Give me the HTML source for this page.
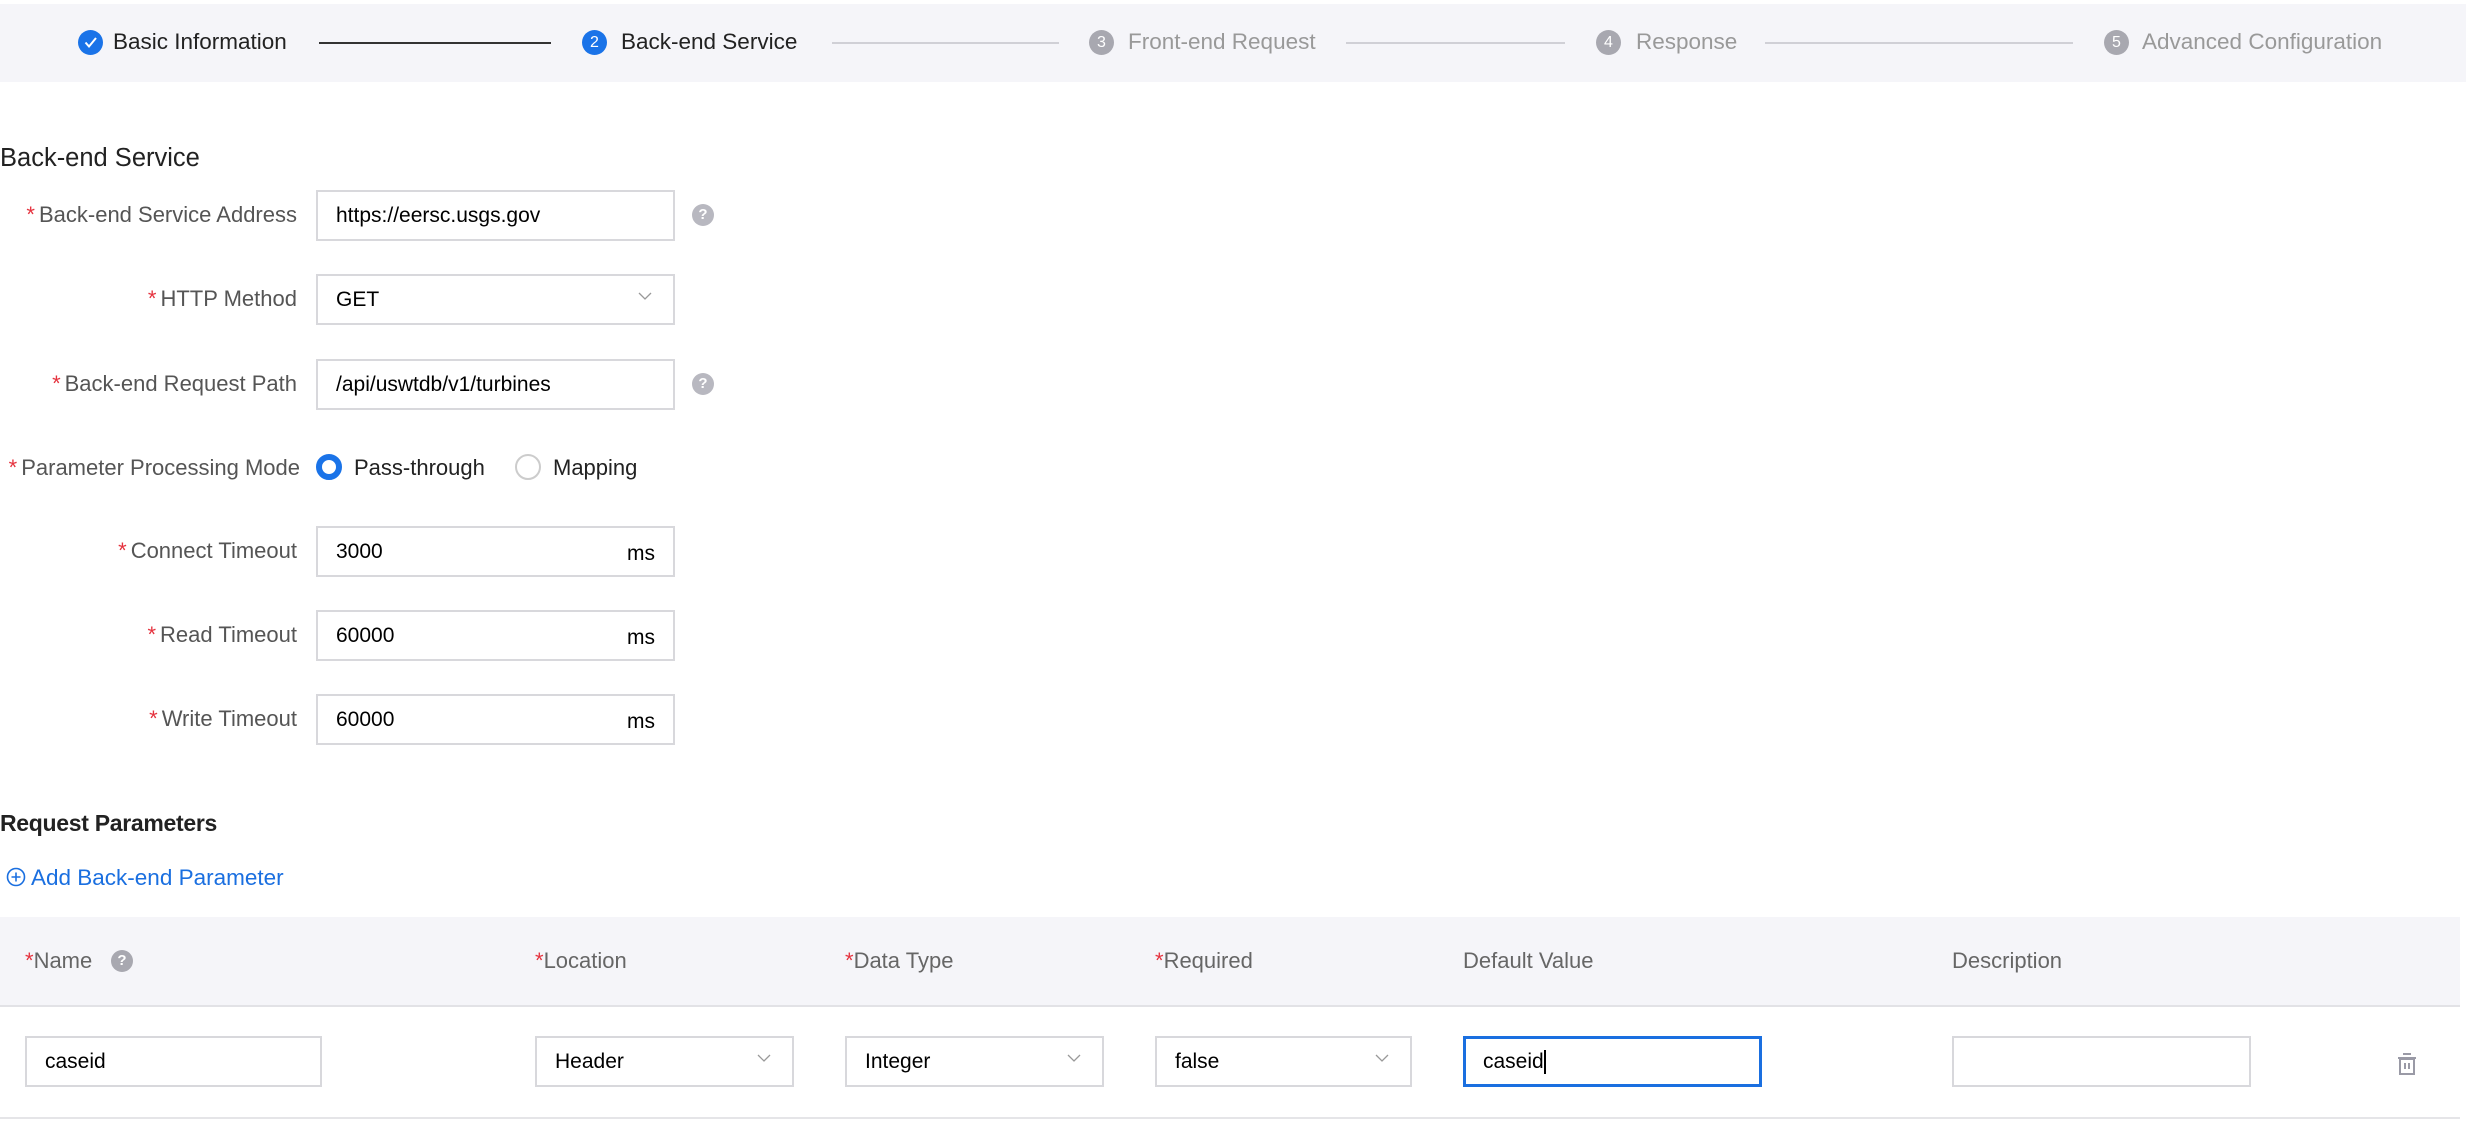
<!DOCTYPE html>
<html><head><meta charset="utf-8"><style>
*{box-sizing:border-box;margin:0;padding:0}
body{width:2466px;height:1126px;background:#fff;font-family:"Liberation Sans",sans-serif;position:relative;overflow:hidden;color:#000}
.a{position:absolute}
.band{left:0;top:4px;width:2466px;height:78px;background:#f5f5f9}
.circ{width:25px;height:25px;border-radius:50%;color:#fff;font-size:16px;text-align:center;line-height:25px}
.st{font-size:22.5px;line-height:26px}
.ln{height:2px}
.lbl{font-size:22px;color:#555;text-align:right;width:297px;left:0;line-height:26px;white-space:nowrap}
.lbl b{color:#e5323e;font-weight:normal;margin-right:4px}
.inp{left:316px;width:359px;height:51px;border:2px solid #d8d8dc;background:#fff;font-size:21px;line-height:47px;padding-left:18px}
.help{width:22px;height:22px;border-radius:50%;background:#b8b8c0;color:#fff;font-size:15px;font-weight:bold;text-align:center;line-height:22px}
.ms{position:absolute;right:18px;top:2px;font-size:21px}
.chev{position:absolute;right:20px;top:12px;width:16px;height:16px}
.th{font-size:22px;color:#666;top:948px;line-height:26px}
.th b{color:#e5323e;font-weight:normal}
.ti{top:1036px;height:51px;border:2px solid #d8d8dc;font-size:21px;line-height:47px;padding-left:18px;background:#fff}
</style></head><body>
<div class="a band"></div>
<div class="a circ" style="left:78px;top:30px;background:#1a73e8"><svg width="25" height="25" viewBox="0 0 25 25"><path d="M7.5 12.5l3.5 4 7-8.5" fill="none" stroke="#fff" stroke-width="2"/></svg></div>
<div class="a st" style="left:113px;top:29px;color:#222">Basic Information</div>
<div class="a ln" style="left:319px;top:42px;width:232px;background:#333"></div>
<div class="a circ" style="left:582px;top:30px;background:#1a73e8">2</div>
<div class="a st" style="left:621px;top:29px;color:#222">Back-end Service</div>
<div class="a ln" style="left:832px;top:42px;width:227px;background:#d0d0d6"></div>
<div class="a circ" style="left:1089px;top:30px;background:#a8a8b0">3</div>
<div class="a st" style="left:1128px;top:29px;color:#999">Front-end Request</div>
<div class="a ln" style="left:1346px;top:42px;width:219px;background:#d0d0d6"></div>
<div class="a circ" style="left:1596px;top:30px;background:#a8a8b0">4</div>
<div class="a st" style="left:1636px;top:29px;color:#999">Response</div>
<div class="a ln" style="left:1765px;top:42px;width:308px;background:#d0d0d6"></div>
<div class="a circ" style="left:2104px;top:30px;background:#a8a8b0">5</div>
<div class="a st" style="left:2142px;top:29px;color:#999">Advanced Configuration</div>

<div class="a" style="left:0;top:144px;font-size:25.5px;color:#222">Back-end Service</div>

<div class="a lbl" style="top:202px"><b>*</b>Back-end Service Address</div>
<div class="a inp" style="top:190px">https://eersc.usgs.gov</div>
<div class="a help" style="left:692px;top:204px">?</div>

<div class="a lbl" style="top:286px"><b>*</b>HTTP Method</div>
<div class="a inp" style="top:274px;font-size:21px">GET<svg class="chev" viewBox="0 0 16 16"><path d="M2 5l6 6 6-6" fill="none" stroke="#999" stroke-width="1.3"/></svg></div>

<div class="a lbl" style="top:371px"><b>*</b>Back-end Request Path</div>
<div class="a inp" style="top:359px">/api/uswtdb/v1/turbines</div>
<div class="a help" style="left:692px;top:373px">?</div>

<div class="a lbl" style="top:455px;width:300px"><b>*</b>Parameter Processing Mode</div>
<div class="a" style="left:316px;top:454px;width:26px;height:26px;border-radius:50%;border:6px solid #1a73e8"></div>
<div class="a" style="left:354px;top:455px;font-size:22px;color:#222">Pass-through</div>
<div class="a" style="left:515px;top:454px;width:26px;height:26px;border-radius:50%;border:2px solid #ccc"></div>
<div class="a" style="left:553px;top:455px;font-size:22px;color:#222">Mapping</div>

<div class="a lbl" style="top:538px"><b>*</b>Connect Timeout</div>
<div class="a inp" style="top:526px">3000<span class="ms">ms</span></div>
<div class="a lbl" style="top:622px"><b>*</b>Read Timeout</div>
<div class="a inp" style="top:610px">60000<span class="ms">ms</span></div>
<div class="a lbl" style="top:706px"><b>*</b>Write Timeout</div>
<div class="a inp" style="top:694px">60000<span class="ms">ms</span></div>

<div class="a" style="left:0;top:810px;font-size:23px;color:#222;font-weight:bold;letter-spacing:-0.3px">Request Parameters</div>
<svg class="a" style="left:6px;top:867px" width="20" height="20" viewBox="0 0 20 20"><circle cx="10" cy="10" r="8.5" fill="none" stroke="#1a6fe0" stroke-width="1.6"/><path d="M10 5.5v9M5.5 10h9" stroke="#1a6fe0" stroke-width="1.6"/></svg>
<div class="a" style="left:31px;top:865px;font-size:22.5px;color:#1a6fe0">Add Back-end Parameter</div>

<div class="a" style="left:0;top:917px;width:2460px;height:90px;background:#f5f5f9;border-bottom:2px solid #e2e2e6"></div>
<div class="a th" style="left:25px"><b>*</b>Name</div>
<div class="a help" style="left:111px;top:950px;background:#a8a8b0">?</div>
<div class="a th" style="left:535px"><b>*</b>Location</div>
<div class="a th" style="left:845px"><b>*</b>Data Type</div>
<div class="a th" style="left:1155px"><b>*</b>Required</div>
<div class="a th" style="left:1463px">Default Value</div>
<div class="a th" style="left:1952px">Description</div>

<div class="a ti" style="left:25px;width:297px">caseid</div>
<div class="a ti" style="left:535px;width:259px">Header<svg class="chev" viewBox="0 0 16 16"><path d="M2 5l6 6 6-6" fill="none" stroke="#999" stroke-width="1.3"/></svg></div>
<div class="a ti" style="left:845px;width:259px">Integer<svg class="chev" viewBox="0 0 16 16"><path d="M2 5l6 6 6-6" fill="none" stroke="#999" stroke-width="1.3"/></svg></div>
<div class="a ti" style="left:1155px;width:257px">false<svg class="chev" viewBox="0 0 16 16"><path d="M2 5l6 6 6-6" fill="none" stroke="#999" stroke-width="1.3"/></svg></div>
<div class="a ti" style="left:1463px;width:299px;border:3px solid #1a6fe0;line-height:45px;padding-left:17px">caseid<span style="display:inline-block;width:2px;height:24px;background:#000;vertical-align:middle"></span></div>
<div class="a ti" style="left:1952px;width:299px"></div>
<svg class="a" style="left:2395px;top:1052px" width="24" height="24" viewBox="0 0 24 24"><path d="M8 2h8" stroke="#9a9aa6" stroke-width="2"/><path d="M3 6h18" stroke="#9a9aa6" stroke-width="2"/><rect x="5" y="7" width="14" height="15" fill="none" stroke="#9a9aa6" stroke-width="2"/><path d="M10 11v6M14 11v6" stroke="#9a9aa6" stroke-width="2"/></svg>
<div class="a" style="left:0;top:1117px;width:2460px;height:2px;background:#e5e5e8"></div>
</body></html>
